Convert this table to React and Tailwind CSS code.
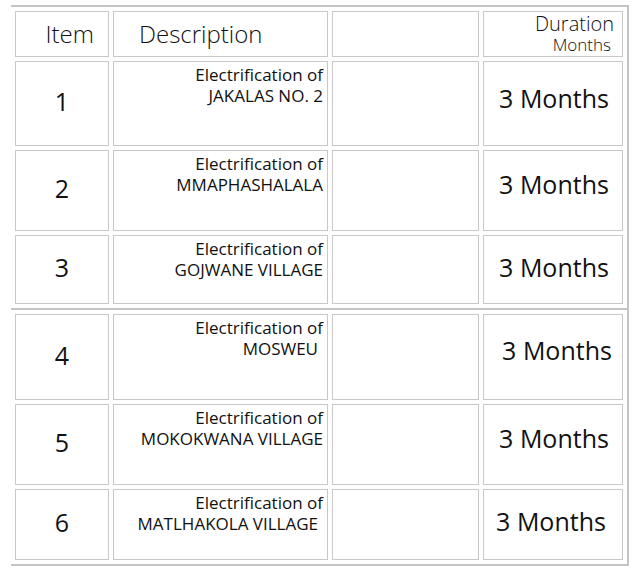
import React from "react";

const firstRows = [
  { item: "1", place: "JAKALAS NO. 2", h: "h-[85px]", shift: "pb-[10px] pl-[2px]", tail: "" },
  { item: "2", place: "MMAPHASHALALA", h: "h-[81px]", shift: "pb-[11px] pl-[2px]", tail: "" },
  { item: "3", place: "GOJWANE VILLAGE", h: "h-[69px]", shift: "pb-[3px] pl-[2px]", tail: "" },
];

const secondRows = [
  { item: "4", place: "MOSWEU", h: "h-[86px]", shift: "pb-[12px] pl-[8px]", tail: "pr-[5px]" },
  { item: "5", place: "MOKOKWANA VILLAGE", h: "h-[81px]", shift: "pb-[11px] pl-[2px]", tail: "" },
  { item: "6", place: "MATLHAKOLA VILLAGE", h: "h-[71px]", shift: "pb-[6px] pr-[4px]", tail: "pr-[5px]" },
];

const cell = "border border-[#c8c8c8] p-0";

const Row = ({ row }) => (
  <tr className={row.h}>
    <td className={`${cell} w-[94px] text-center align-middle text-[25px] pb-[3px]`}>
      {row.item}
    </td>
    <td className={`${cell} w-[215px] align-top text-right pr-[4px] pt-[2px] text-[17px] leading-[21px]`}>
      <div>Electrification of</div>
      <div className={row.tail}>{row.place}</div>
    </td>
    <td className={`${cell} w-[147px]`}></td>
    <td className={`${cell} w-[140px] text-center align-middle text-[25px] ${row.shift}`}>
      3 Months
    </td>
  </tr>
);

export default function App() {
  return (
    <div
      className="bg-white text-[#111111] pl-[11px] pt-[5px] pb-4"
      style={{ fontFamily: '"Open Sans", "Liberation Sans", sans-serif' }}
    >
      <table className="table-fixed border-separate border-spacing-[4px] border-t-2 border-r-2 border-b-2 border-[#c4c4c4]">
        <tbody>
          <tr className="h-[46px]">
            <td className={`${cell} text-right pr-[14px] text-[24px] font-light align-middle`}>
              Item
            </td>
            <td className={`${cell} pl-[25px] text-[24px] font-light align-middle`}>
              Description
            </td>
            <td className={cell}></td>
            <td className={`${cell} text-right align-top font-light pt-[1px]`}>
              <div className="text-[20px] leading-[22px] pr-[8px]">Duration</div>
              <div className="text-[17px] leading-[19px] pr-[11px]">Months</div>
            </td>
          </tr>
          {firstRows.map((row) => (
            <Row key={row.item} row={row} />
          ))}
        </tbody>
      </table>
      <table className="table-fixed border-separate border-spacing-[4px] border-r-2 border-b-2 border-[#c4c4c4]">
        <tbody>
          {secondRows.map((row) => (
            <Row key={row.item} row={row} />
          ))}
        </tbody>
      </table>
    </div>
  );
}
